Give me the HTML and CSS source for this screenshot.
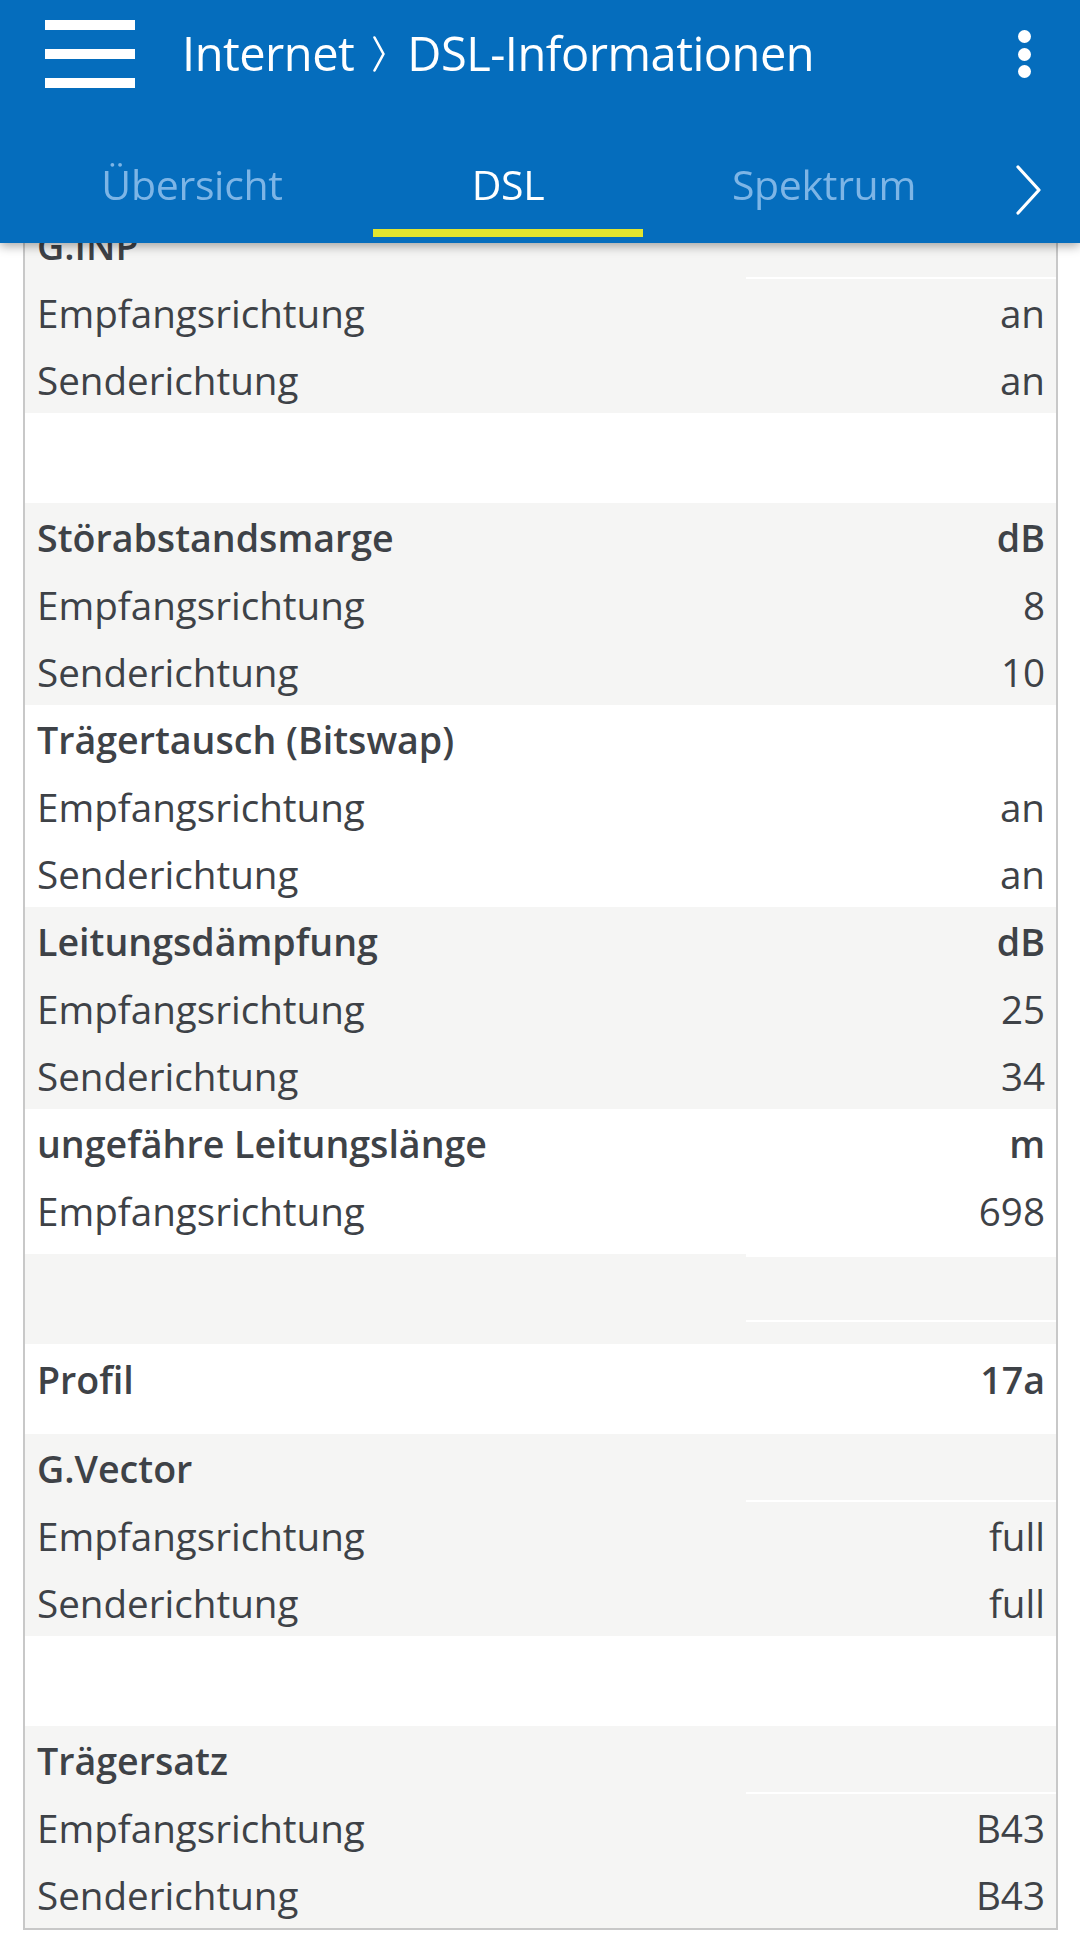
FILE: index.html
```html
<!DOCTYPE html>
<html lang="de">
<head>
<meta charset="utf-8">
<title>Internet › DSL-Informationen</title>
<link rel="stylesheet" href="styles.css">
</head>
<body>
<header class="appbar">
  <div class="toolbar">
    <div class="burger"><span></span><span></span><span></span></div>
    <h1 class="title">
      <span>Internet</span>
      <svg class="crumb" viewBox="0 0 12 36" width="12" height="36"><path d="M1.5 1.5 L10.5 18 L1.5 34.5" fill="none" stroke="#fff" stroke-width="2.6" stroke-linecap="round" stroke-linejoin="round"/></svg>
      <span>DSL-Informationen</span>
    </h1>
    <div class="kebab"><i></i><i></i><i></i></div>
  </div>
  <nav class="tabs">
    <div class="tab"><span class="tab-label">Übersicht</span><span class="tab-line"></span></div>
    <div class="tab active"><span class="tab-label">DSL</span><span class="tab-line"></span></div>
    <div class="tab"><span class="tab-label">Spektrum</span><span class="tab-line"></span></div>
    <div class="tab-more">
      <svg viewBox="0 0 26 50" width="26" height="50"><path d="M2 2 L23 25 L2 48" fill="none" stroke="#fff" stroke-width="3.2" stroke-linecap="round" stroke-linejoin="round"/></svg>
    </div>
  </nav>
</header>

<main class="card">
  <section class="group gray">
    <div class="row head"><div class="lbl">G.INP</div><div class="val empty"></div></div>
    <div class="row"><div class="lbl">Empfangsrichtung</div><div class="val">an</div></div>
    <div class="row"><div class="lbl">Senderichtung</div><div class="val">an</div></div>
  </section>
  <section class="spacer white"></section>
  <section class="group gray">
    <div class="row head"><div class="lbl">Störabstandsmarge</div><div class="val">dB</div></div>
    <div class="row"><div class="lbl">Empfangsrichtung</div><div class="val">8</div></div>
    <div class="row"><div class="lbl">Senderichtung</div><div class="val">10</div></div>
  </section>
  <section class="group white">
    <div class="row head"><div class="lbl">Trägertausch (Bitswap)</div><div class="val empty"></div></div>
    <div class="row"><div class="lbl">Empfangsrichtung</div><div class="val">an</div></div>
    <div class="row"><div class="lbl">Senderichtung</div><div class="val">an</div></div>
  </section>
  <section class="group gray">
    <div class="row head"><div class="lbl">Leitungsdämpfung</div><div class="val">dB</div></div>
    <div class="row"><div class="lbl">Empfangsrichtung</div><div class="val">25</div></div>
    <div class="row"><div class="lbl">Senderichtung</div><div class="val">34</div></div>
  </section>
  <section class="group white short">
    <div class="row head"><div class="lbl">ungefähre Leitungslänge</div><div class="val">m</div></div>
    <div class="row"><div class="lbl">Empfangsrichtung</div><div class="val">698</div></div>
  </section>
  <section class="spacer gray"><div class="spacer-val"></div></section>
  <section class="group white single">
    <div class="row head"><div class="lbl">Profil</div><div class="val">17a</div></div>
  </section>
  <section class="group gray">
    <div class="row head"><div class="lbl">G.Vector</div><div class="val empty"></div></div>
    <div class="row"><div class="lbl">Empfangsrichtung</div><div class="val">full</div></div>
    <div class="row"><div class="lbl">Senderichtung</div><div class="val">full</div></div>
  </section>
  <section class="spacer white"></section>
  <section class="group gray">
    <div class="row head"><div class="lbl">Trägersatz</div><div class="val empty"></div></div>
    <div class="row"><div class="lbl">Empfangsrichtung</div><div class="val">B43</div></div>
    <div class="row"><div class="lbl">Senderichtung</div><div class="val">B43</div></div>
  </section>
</main>
</body>
</html>
```

FILE: styles.css
```css
* { box-sizing: border-box; }

html, body {
  margin: 0;
  padding: 0;
  background: #ffffff;
}

body {
  font-family: "Open Sans", "Noto Sans", sans-serif;
  color: #3e4247;
  padding-top: 211px;
  min-height: 1957px;
}

/* ---------- App bar ---------- */
.appbar {
  position: fixed;
  top: 0;
  left: 0;
  right: 0;
  height: 243px;
  background: #056dbd;
  z-index: 10;
  box-shadow: 0 3px 10px rgba(0, 0, 0, 0.35);
}

.toolbar {
  height: 108px;
  display: flex;
  align-items: center;
  padding-left: 45px;
}

.burger {
  width: 90px;
  height: 68px;
  display: flex;
  flex-direction: column;
  justify-content: space-between;
}
.burger span {
  display: block;
  height: 10px;
  background: #ffffff;
}

.title {
  margin: -3px 0 0 47px;
  display: flex;
  align-items: center;
  font-weight: 400;
  font-size: 47px;
  color: #ffffff;
  letter-spacing: -0.5px;
  white-space: nowrap;
  flex: 1;
}
.crumb {
  margin: 3px 22px 0 19px;
}

.kebab {
  width: 20px;
  height: 48px;
  margin-right: 46px;
  display: flex;
  flex-direction: column;
  justify-content: space-between;
  align-items: center;
}
.kebab i {
  width: 13px;
  height: 13px;
  border-radius: 50%;
  background: #ffffff;
}

.tabs {
  height: 135px;
  display: flex;
  padding-left: 34px;
}
.tab {
  width: 316px;
  display: flex;
  flex-direction: column;
  align-items: center;
  padding-top: 48px;
}
.tab-label {
  height: 56px;
  line-height: 56px;
  font-size: 41px;
  color: #7db5e6;
  letter-spacing: -0.3px;
}
.tab.active .tab-label { color: #ffffff; }
.tab-line {
  margin-top: 17px;
  width: 270px;
  height: 8px;
  background: transparent;
}
.tab.active .tab-line { background: #e2e52f; }

.tab-more {
  flex: 1;
  display: flex;
  align-items: center;
  justify-content: center;
  padding: 28px 4px 0 0;
}

/* ---------- Table card ---------- */
.card {
  margin-left: 23px;
  width: 1035px;
  border: 2px solid #c8c8c8;
  border-top: none;
  font-size: 38.6px;
}

.gray { background: #f5f5f4; }
.white { background: #ffffff; }

.row {
  display: grid;
  grid-template-columns: 721px 1fr;
  height: 67px;
  align-items: center;
}
.row.head {
  height: 68px;
  font-weight: 600;
  font-size: 37.6px;
}
.lbl {
  padding-left: 12px;
  white-space: nowrap;
}
.val {
  padding-right: 11px;
  text-align: right;
  height: 100%;
  display: flex;
  align-items: center;
  justify-content: flex-end;
}
.gray .val.empty {
  box-shadow: inset 0 -2px 0 #ffffff;
}

.group.short { padding-bottom: 10px; }

.group.single .row.head {
  height: 90px;
  align-items: start;
}
.group.single .lbl,
.group.single .val {
  line-height: 72px;
  height: 72px;
}

.spacer {
  height: 90px;
  display: grid;
  grid-template-columns: 721px 1fr;
}
.spacer-val {
  grid-column: 2;
  background: linear-gradient(to bottom, #ffffff 0 3px, transparent 3px 66px, #ffffff 66px 68px, transparent 68px);
}
```
